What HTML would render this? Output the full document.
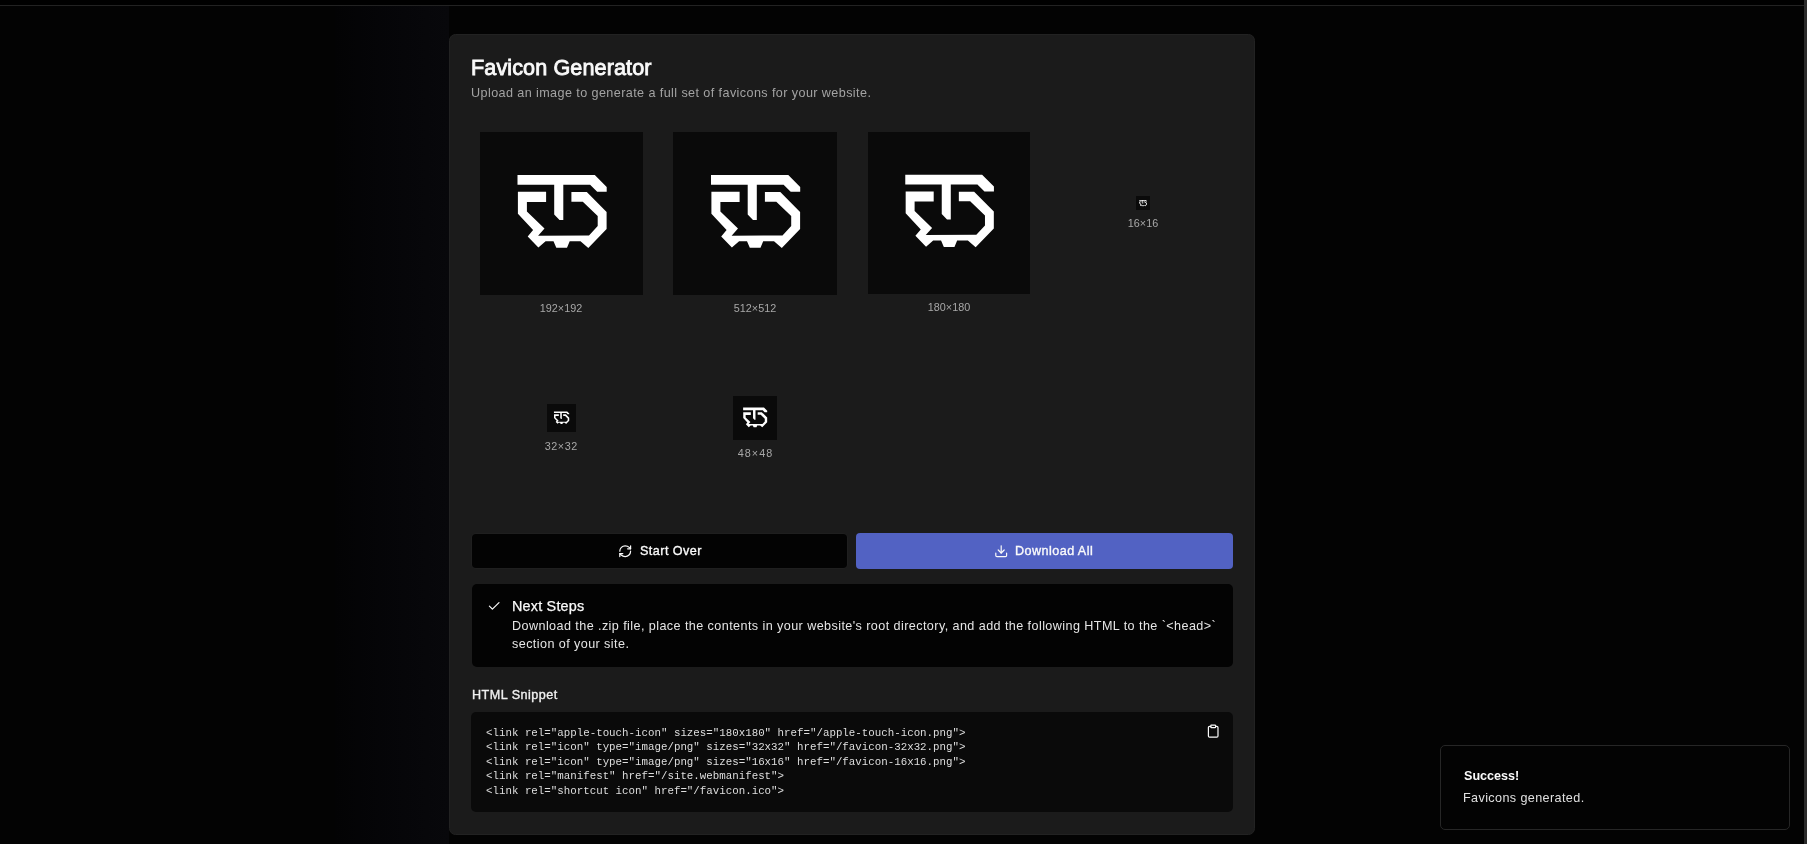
<!DOCTYPE html>
<html>
<head>
<meta charset="utf-8">
<style>
*{margin:0;padding:0;box-sizing:border-box}
html,body{width:1807px;height:844px;overflow:hidden}
body{background:#030303;font-family:"Liberation Sans",sans-serif;position:relative;color:#fafafa}
.abs{position:absolute}
.title,.sub,.lbl,.btxt,.st-t,.st-b,.snip,.ct,.to-t,.to-b{will-change:transform}
.topline{left:0;top:5px;width:1804px;height:1px;background:#222}
.scroll{left:1804px;top:0;width:3px;height:844px;background:#2b2b2b}
.card{left:449px;top:34px;width:806px;height:801px;background:#1b1b1b;border:1px solid #222;border-radius:6.5px}
.band{left:335px;top:6px;width:114px;height:838px;background:linear-gradient(to right,#030304,#060609 60%,#08080b)}
.title{left:471px;top:52.5px;font-size:21.6px;font-weight:normal;-webkit-text-stroke:0.85px #fafafa;letter-spacing:0.1px;white-space:nowrap;line-height:30px;color:#fafafa}
.sub{left:471px;top:83.5px;font-size:12.6px;letter-spacing:0.41px;white-space:nowrap;line-height:18px;color:#a3a3a3}
.cell{background:#1e1e1e;border-radius:5px}
.ibox{background:#0a0a0a}
.ibox svg{display:block;width:100%;height:100%}
.lbl{font-size:10.8px;color:#a8a8a8;white-space:nowrap;text-align:center;line-height:14px;width:120px}
.btn{border-radius:4px;font-size:12.6px;font-weight:bold;display:flex;align-items:center;justify-content:center;white-space:nowrap}
.b1{left:472px;top:533.7px;width:375px;height:34px;background:#030303;box-shadow:0 0 0 1px #1f1f1f}
.b2{left:855.8px;top:533px;width:377px;height:35.5px;background:#5262c3}
.steps{left:472px;top:584px;width:761px;height:82.5px;background:#030303;border-radius:5px}
.st-t{left:512px;top:597px;font-size:14.4px;-webkit-text-stroke:0.25px #fafafa;letter-spacing:0.2px;line-height:18px;white-space:nowrap;color:#fafafa}
.st-b{left:512px;top:617px;font-size:12.6px;letter-spacing:0.42px;line-height:18px;white-space:nowrap;color:#e5e5e5}
.snip{left:471.5px;top:686px;font-size:12.6px;font-weight:normal;-webkit-text-stroke:0.35px #f0f0f0;letter-spacing:0.47px;line-height:18px;color:#f0f0f0;white-space:nowrap}
.code{left:471px;top:711.5px;width:762px;height:100.5px;background:#0a0a0a;border-radius:5px}
.ct{left:485.5px;top:726px;font-family:"Liberation Mono",monospace;font-size:10.8px;line-height:14.4px;color:#dedede;white-space:pre}
.ic{width:14.4px;height:14.4px;fill:none;stroke:#fafafa;stroke-width:2;stroke-linecap:round;stroke-linejoin:round}
.btxt{font-size:12.6px;font-weight:normal;-webkit-text-stroke:0.35px #fafafa;letter-spacing:0.45px;line-height:18px;white-space:nowrap;color:#fafafa}
.toast{left:1440px;top:745px;width:350px;height:85px;background:#030303;border:1px solid #262626;border-radius:5px}
.to-t{left:1463.5px;top:768px;font-size:12.6px;font-weight:bold;line-height:16px;color:#fafafa;white-space:nowrap}
.to-b{left:1463px;top:790px;font-size:12.6px;letter-spacing:0.39px;line-height:16px;color:#e0e0e0;white-space:nowrap}
</style>
</head>
<body>
<svg width="0" height="0" style="position:absolute">
<defs>
<symbol id="logo" viewBox="0 0 163 163">
<path fill="#fff" d="M37.5,43 L114.8,43 L126.7,54.9 L126.7,59.8 L117.2,59.8 L110.1,52.7 L83.3,52.7 L83.3,88 L79.5,88 L74.2,82.5 L74.2,52.7 L37.5,52.7 Z"/>
<path fill="#fff" d="M37.9,59.8 L66.1,59.8 L66.1,70 L46.9,70 L46.9,79.4 L64.5,96.5 L58.1,103.7 L109,103.5 L117.7,94.1 L117.7,84 L102.8,69.8 L91.4,69.8 L91.4,60 L106.8,60 L126.6,79.9 L126.6,97 L108.3,116 L100.5,109.2 L89.7,109.2 L87,115.8 L76.3,115.8 L73.5,109.2 L65.6,109.2 L58.4,115.4 L47.7,104.5 L53.1,98.1 L37.9,81.8 Z"/>
</symbol>
</defs>
</svg>
<div class="abs" style="left:0;top:0;width:1804px;height:5px;background:#000"></div>
<div class="abs topline"></div>
<div class="abs scroll"></div>
<div class="abs band"></div>
<div class="abs card"></div>
<div class="abs title">Favicon Generator</div>
<div class="abs sub">Upload an image to generate a full set of favicons for your website.</div>

<!-- grid row 1 -->
<div class="abs ibox" style="left:480px;top:132px;width:163px;height:163px"><svg><use href="#logo"/></svg></div>
<div class="abs lbl" style="left:501px;top:301px">192×192</div>
<div class="abs ibox" style="left:673px;top:132px;width:164px;height:163px"><svg><use href="#logo"/></svg></div>
<div class="abs lbl" style="left:695px;top:301px">512×512</div>
<div class="abs ibox" style="left:868px;top:132px;width:162px;height:162px"><svg><use href="#logo"/></svg></div>
<div class="abs lbl" style="left:889px;top:300px">180×180</div>
<div class="abs ibox" style="left:1136px;top:195.5px;width:14px;height:14.5px"><svg><use href="#logo"/></svg></div>
<div class="abs lbl" style="left:1083px;top:216px">16×16</div>
<!-- row 2 -->
<div class="abs ibox" style="left:547px;top:404px;width:29px;height:28px"><svg><use href="#logo"/></svg></div>
<div class="abs lbl" style="left:501px;top:439px;letter-spacing:0.6px;padding-left:0.6px">32×32</div>
<div class="abs ibox" style="left:733px;top:396px;width:44px;height:44px"><svg><use href="#logo"/></svg></div>
<div class="abs lbl" style="left:695px;top:446px;letter-spacing:1px;padding-left:1px">48×48</div>

<div class="abs btn b1"></div>
<svg class="abs ic" style="left:617.8px;top:543.6px" viewBox="0 0 24 24"><path d="M3 12a9 9 0 0 1 9-9 9.75 9.75 0 0 1 6.74 2.74L21 8"/><path d="M21 3v5h-5"/><path d="M21 12a9 9 0 0 1-9 9 9.75 9.75 0 0 1-6.74-2.74L3 16"/><path d="M8 16H3v5"/></svg>
<div class="abs btxt" style="left:640px;top:541.5px">Start Over</div>
<div class="abs btn b2"></div>
<svg class="abs ic" style="left:993.8px;top:543.7px" viewBox="0 0 24 24"><path d="M21 15v4a2 2 0 0 1-2 2H5a2 2 0 0 1-2-2v-4"/><polyline points="7 10 12 15 17 10"/><line x1="12" x2="12" y1="15" y2="3"/></svg>
<div class="abs btxt" style="left:1015px;top:541.5px">Download All</div>

<div class="abs steps"></div>
<svg class="abs ic" style="left:487.2px;top:599px" viewBox="0 0 24 24"><path d="M20 6 9 17l-5-5"/></svg>
<div class="abs st-t">Next Steps</div>
<div class="abs st-b">Download the .zip file, place the contents in your website's root directory, and add the following HTML to the `&lt;head&gt;`<br>section of your site.</div>

<div class="abs snip">HTML Snippet</div>
<div class="abs code"></div>
<div class="abs ct">&lt;link rel="apple-touch-icon" sizes="180x180" href="/apple-touch-icon.png"&gt;
&lt;link rel="icon" type="image/png" sizes="32x32" href="/favicon-32x32.png"&gt;
&lt;link rel="icon" type="image/png" sizes="16x16" href="/favicon-16x16.png"&gt;
&lt;link rel="manifest" href="/site.webmanifest"&gt;
&lt;link rel="shortcut icon" href="/favicon.ico"&gt;</div>

<svg class="abs ic" style="left:1206.3px;top:723.8px" viewBox="0 0 24 24"><rect width="8" height="4" x="8" y="2" rx="1" ry="1"/><path d="M16 4h2a2 2 0 0 1 2 2v14a2 2 0 0 1-2 2H6a2 2 0 0 1-2-2V6a2 2 0 0 1 2-2h2"/></svg>
<div class="abs toast"></div>
<div class="abs to-t">Success!</div>
<div class="abs to-b">Favicons generated.</div>
</body>
</html>
